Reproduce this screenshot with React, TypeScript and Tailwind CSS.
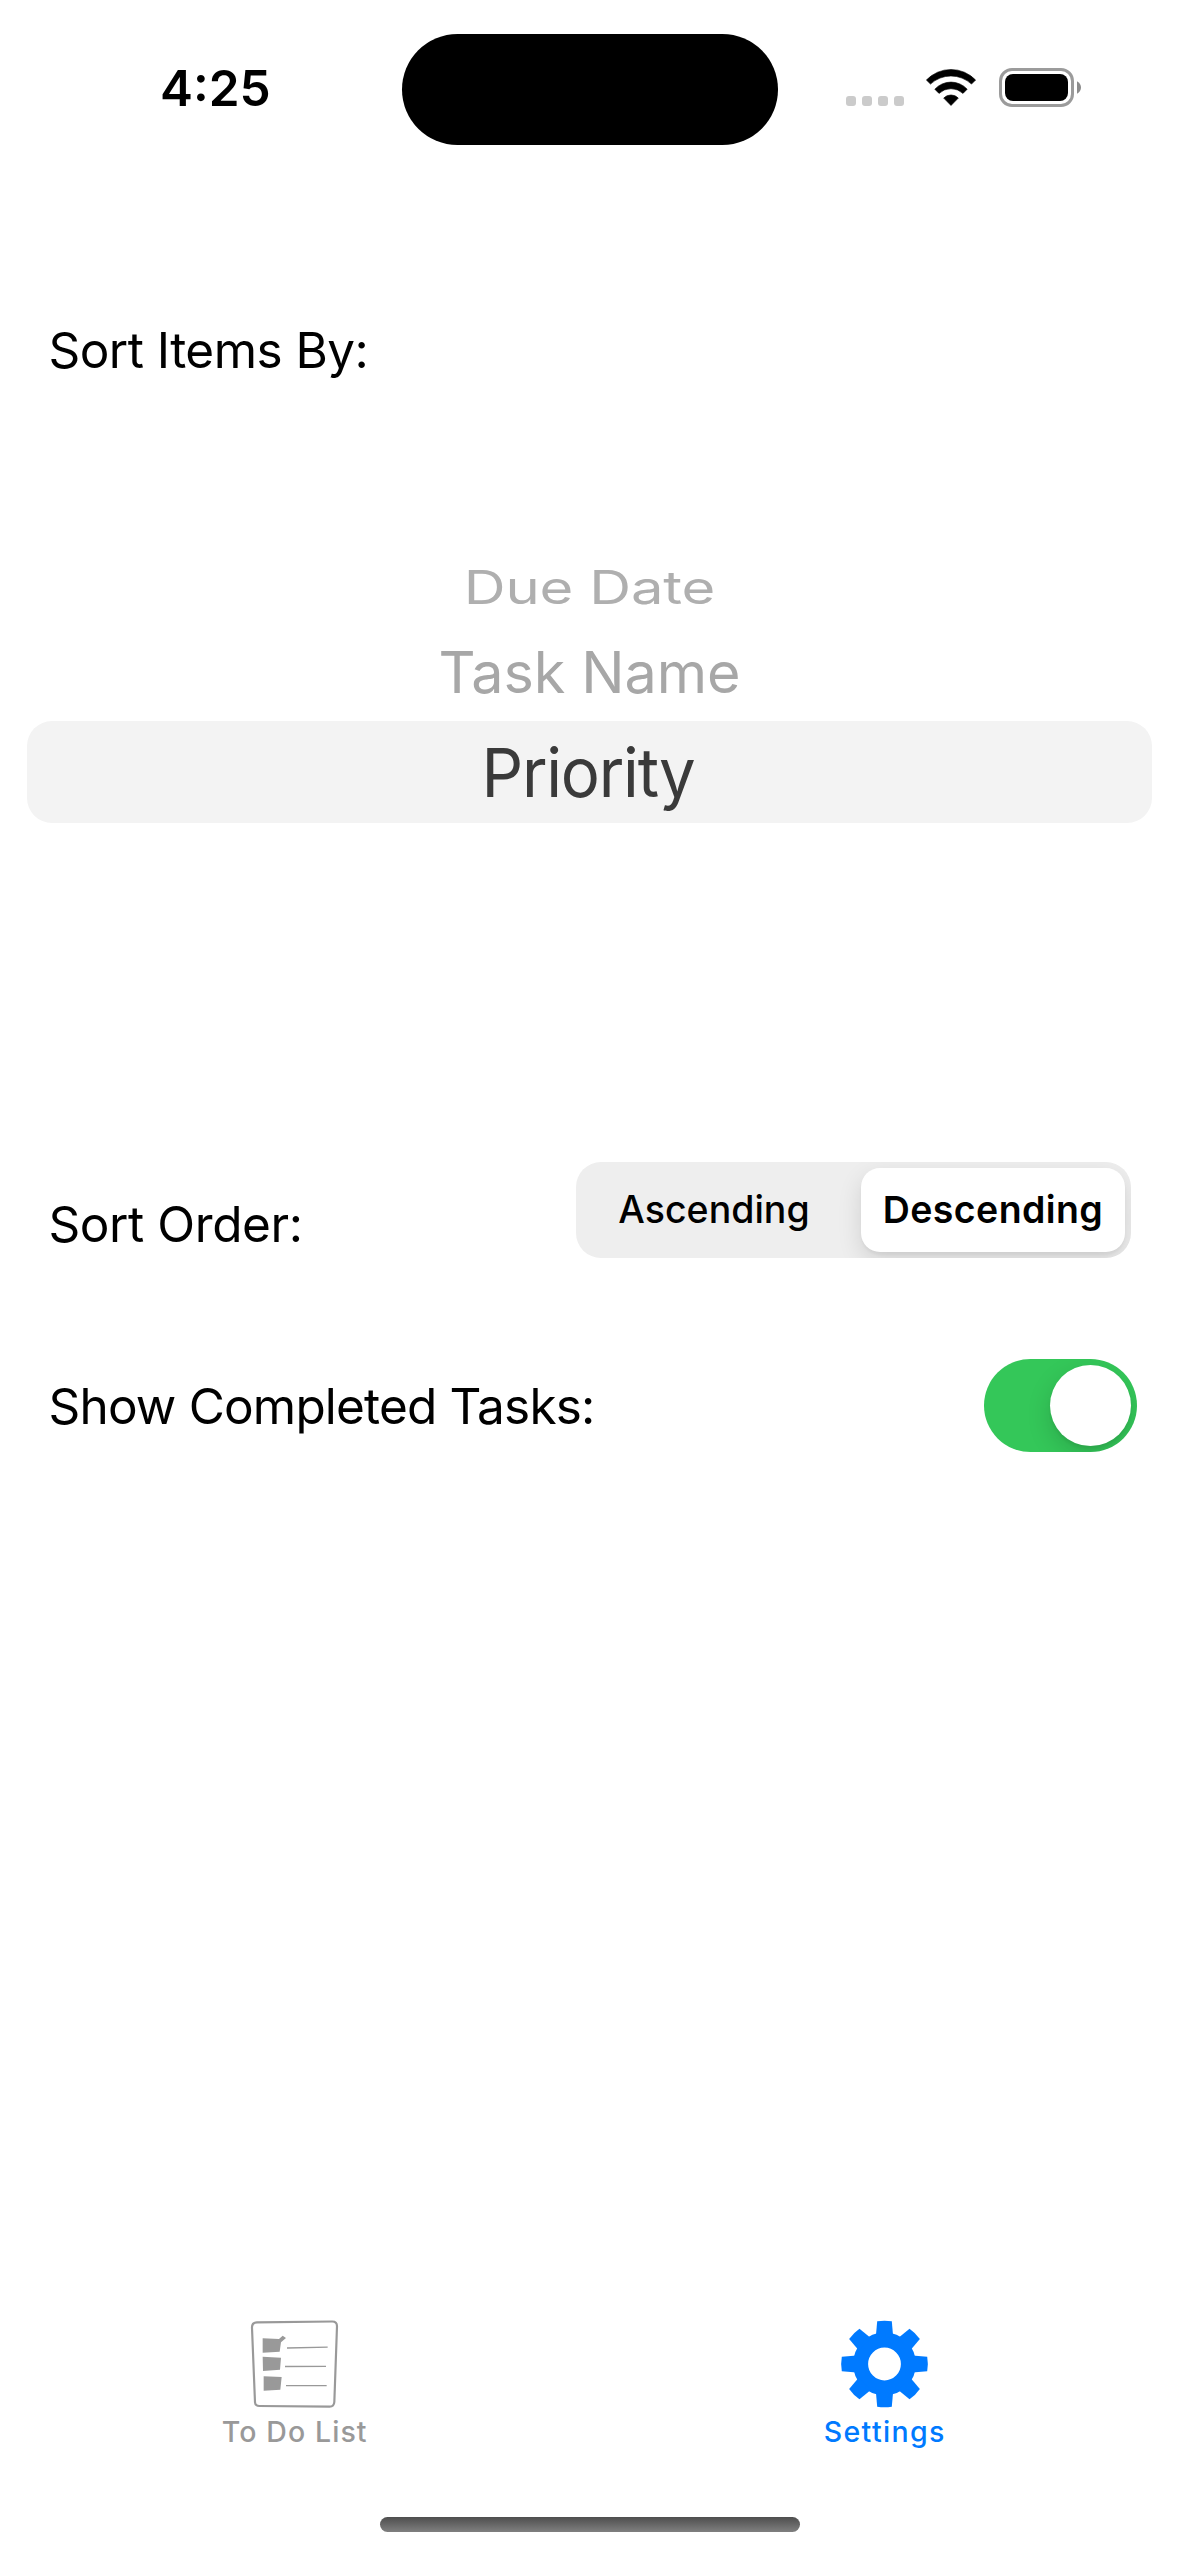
const TEETH = [0, 45, 90, 135, 180, 225, 270, 315];

function StatusBar() {
  return (
    <header className="relative flex h-[178px] shrink-0 items-center justify-between pr-[98px] pl-[160px]">
      <span className="-mt-[2px] text-[49.5px] leading-[60px] font-semibold">4:25</span>
      <div className="absolute top-[33.6px] left-[401.5px] h-[111px] w-[376px] rounded-full bg-black" />
      <div className="-mt-[3px] flex items-center">
        <div className="mt-[27px] mr-[22px] flex gap-[6px]">
          <i className="size-[10px] rounded-[3px] bg-[#cbcbcb]" />
          <i className="size-[10px] rounded-[3px] bg-[#cbcbcb]" />
          <i className="size-[10px] rounded-[3px] bg-[#cbcbcb]" />
          <i className="size-[10px] rounded-[3px] bg-[#cbcbcb]" />
        </div>
        <svg className="mr-[23px] h-[37px] w-[50px]" viewBox="0 0 50 37" strokeLinejoin="round" stroke="#000" strokeWidth="0.6">
          <path d="M.4 11A34 34 0 0 1 49.6 11L45.5 15.1A30 30 0 0 0 4.5 15.1Z" />
          <path d="M8.8 20.2A22 22 0 0 1 41.2 20.2L37 24.4A17.7 17.7 0 0 0 13 24.4Z" />
          <path d="M17.7 29.1A10 10 0 0 1 32.3 29.1L25 36.5Z" />
        </svg>
        <svg className="h-[39px] w-[82px]" viewBox="0 0 82 39">
          <rect x="1.5" y="1.5" width="72" height="36" rx="11.5" fill="none" stroke="#9b9b9b" strokeWidth="3" />
          <rect x="6" y="6" width="63" height="27" rx="8" />
          <path d="M78 13.2Q82 15.6 82 19.5T78 25.8Z" fill="#8c8c8c" />
        </svg>
      </div>
    </header>
  );
}

function SortPicker() {
  return (
    <section className="mt-[167px] flex flex-col items-center">
      <div className="h-[80px] scale-y-[0.795] text-[58px] leading-[80px] tracking-[-0.2px] text-[#afafaf]">Due Date</div>
      <div className="h-[91px] text-[57.5px] leading-[91px] tracking-[-0.1px] text-[#a7a7a7]">Task Name</div>
      <div className="mt-[3px] flex h-[102px] w-[1125px] items-center justify-center rounded-[25px] bg-[#f3f3f3]">
        <span className="scale-x-[0.96] pr-[3px] text-[68px] leading-[101px] tracking-[-1.3px] text-[#3a3a3a]">Priority</span>
      </div>
    </section>
  );
}

function ListIcon() {
  return (
    <svg className="size-[90px]" viewBox="150 55 270 270">
      <path
        d="M171 65L397 62.500Q411 62.500 411 77L403 304Q402 318 389 318L178 316Q166 316 165 305L156 82Q155 66 171 65Z"
        fill="none"
        stroke="#999"
        strokeWidth="6.500"
      />
      <path
        d="M188 113L237 115L248 105L258 112L243 125L239 153L188 156ZM188 168L243 171L240 207L189 211ZM191 227L245 229L241 267L191 270Z"
        fill="#999"
      />
      <path d="M261 142L383 139.500M255 197.500L378 197M258 255L380 255" stroke="#999" strokeWidth="4" />
    </svg>
  );
}

function GearIcon() {
  return (
    <svg className="size-[90px]" viewBox="-45.5 -45 90 90" fill="#007aff">
      <circle r="23.900" fill="none" stroke="#007aff" strokeWidth="15" />
      {TEETH.map((angle) => (
        <path key={angle} d="M-8.600 -28L-7.300 -42.700Q0 -44 7.300 -42.700L8.600 -28Z" transform={`rotate(${angle})`} />
      ))}
    </svg>
  );
}

export default function App() {
  return (
    <div className="flex h-[2556px] w-[1179px] flex-col overflow-hidden bg-white font-['Inter',sans-serif] whitespace-nowrap text-black">
      <StatusBar />
      <h1 className="mt-[142px] pl-[48.5px] text-[49.5px] leading-[60px] tracking-[-0.55px]">Sort Items By:</h1>
      <SortPicker />
      <div className="mt-[339px] flex h-[96px] items-start justify-between pr-[48px] pl-[48.5px]">
        <span className="mt-[14px] text-[49.5px] leading-[96px] tracking-[-0.42px]">Sort Order:</span>
        <div className="flex h-[96px] w-[555px] items-center overflow-hidden rounded-[25px] bg-[#eeeeee] text-[37.5px]">
          <button className="w-[276px] pt-px font-medium">Ascending</button>
          <button className="ml-[9px] h-[84px] w-[264px] rounded-[19px] bg-white pt-px font-semibold tracking-[0.4px] shadow-[0_9px_24px_rgba(0,0,0,0.12),0_3px_3px_rgba(0,0,0,0.04)]">
            Descending
          </button>
        </div>
      </div>
      <div className="mt-[101px] flex h-[93px] items-center justify-between pr-[42px] pl-[48.5px]">
        <span className="pt-px text-[49.5px] leading-[93px] tracking-[-0.82px]">Show Completed Tasks:</span>
        <button className="flex h-[93px] w-[153px] items-center justify-end overflow-hidden rounded-full bg-[#34c759] p-[6px]">
          <span className="size-[81px] rounded-full bg-white shadow-[0_9px_24px_rgba(0,0,0,0.15),0_3px_3px_rgba(0,0,0,0.06)]" />
        </button>
      </div>
      <nav className="mt-auto grid grid-cols-2 text-[28.5px] leading-[36px] font-medium">
        <div className="flex flex-col items-center gap-[5px] text-[#999999]">
          <ListIcon />
          <span className="tracking-[1.09px]">To Do List</span>
        </div>
        <div className="flex flex-col items-center gap-[5px] text-[#007aff]">
          <GearIcon />
          <span className="pl-px tracking-[1.37px]">Settings</span>
        </div>
      </nav>
      <div className="mt-[67.5px] mb-[24px] h-[15px] w-[420px] shrink-0 self-center rounded-full bg-linear-to-b from-[#4e4e4e] to-[#808080]" />
    </div>
  );
}
